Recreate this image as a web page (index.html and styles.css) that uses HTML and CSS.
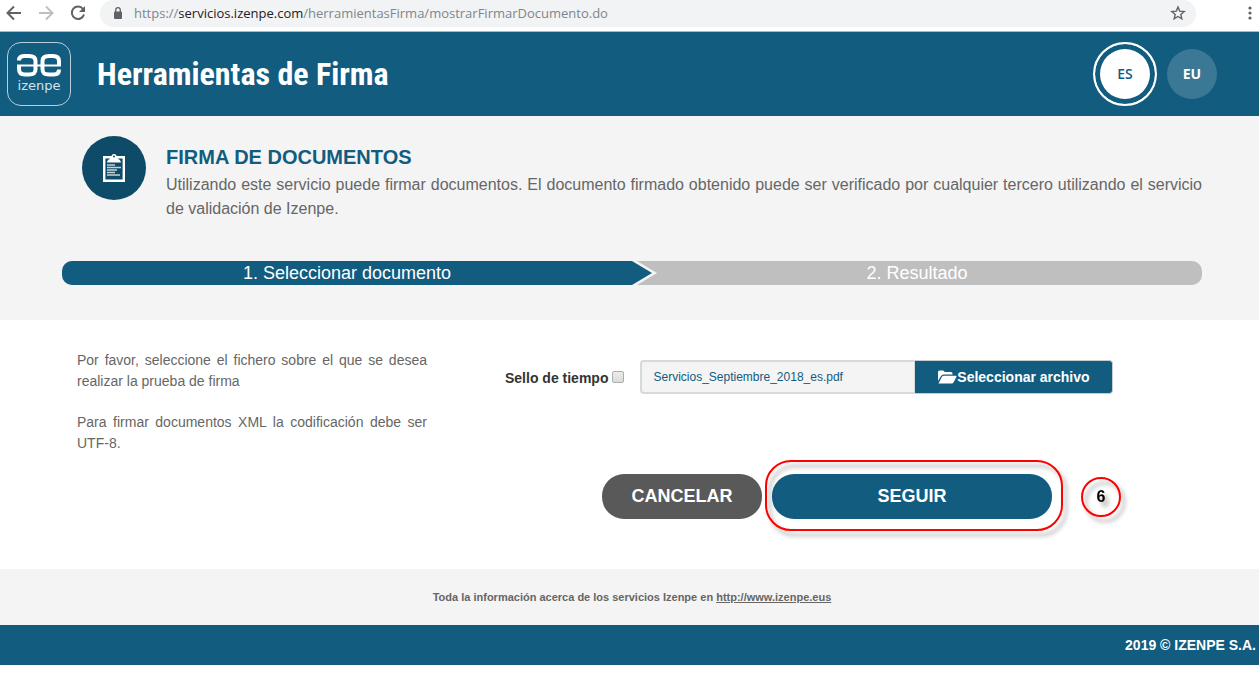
FILE: index.html
```html
<!DOCTYPE html>
<html lang="es">
<head>
    <meta charset="UTF-8">
    <meta name="viewport" content="width=device-width, initial-scale=1.0">
    <title>Herramientas de Firma</title>
    <link rel="stylesheet" href="styles.css">
</head>
<body>
    <div class="browser-bar">
        <button class="nav-btn" type="button" aria-label="Atrás">
            <svg width="16" height="16" viewBox="0 0 16 16"><path d="M15 8H2M8 1.5L1.5 8L8 14.5" fill="none" stroke="#5f6368" stroke-width="2"/></svg>
        </button>
        <button class="nav-btn" type="button" aria-label="Adelante">
            <svg width="16" height="16" viewBox="0 0 16 16"><path d="M1 8H14M8 1.5L14.5 8L8 14.5" fill="none" stroke="#bdbfc1" stroke-width="2"/></svg>
        </button>
        <button class="nav-btn" type="button" aria-label="Recargar">
            <svg width="16" height="16" viewBox="0 0 16 16"><path d="M13 4A6.2 6.2 0 1 0 14 9.5" fill="none" stroke="#5f6368" stroke-width="2"/><path d="M15 1V7H9Z" fill="#5f6368"/></svg>
        </button>
        <div class="address">
            <svg width="10" height="12" viewBox="0 0 10 12"><rect x="1" y="4.500" width="8" height="7.500" rx="1" fill="#5f6368"/><path d="M2.700 5V3a2.300 2.300 0 0 1 4.600 0V5" fill="none" stroke="#5f6368" stroke-width="1.300"/></svg>
            <span class="url">https://<b>servicios.izenpe.com</b>/herramientasFirma/mostrarFirmarDocumento.do</span>
            <svg width="16" height="16" viewBox="0 0 16 16"><path d="M8 2L9.700 6.100L14.200 6.500L10.800 9.400L11.800 13.800L8 11.500L4.200 13.800L5.200 9.400L1.800 6.500L6.300 6.100Z" fill="none" stroke="#5f6368" stroke-width="1.400"/></svg>
        </div>
        <button class="nav-btn menu-btn" type="button" aria-label="Menú">
            <svg width="4" height="14" viewBox="0 0 4 14"><circle cx="2" cy="2" r="1.600" fill="#5f6368"/><circle cx="2" cy="7" r="1.600" fill="#5f6368"/><circle cx="2" cy="12" r="1.600" fill="#5f6368"/></svg>
        </button>
    </div>

    <header class="header">
        <div class="logo">
            <svg width="46" height="24" viewBox="0 0 46 24" fill="none" stroke="#fff" stroke-width="4">
                <path d="M3 7.500C3 4 5 3 8 3H13C18 3 19.500 5 19.500 8V16C19.500 20 18 21.500 13 21.500H9C5 21.500 3 20 3 16V12"/>
                <path d="M43 16.500C43 20 41 21.500 38 21.500H33C28 21.500 26.500 20 26.500 16V8C26.500 5 28 3 33 3H37C41 3 43 5 43 8V13"/>
                <path d="M1 12.500H45" stroke-width="2"/>
            </svg>
            <span>izenpe</span>
        </div>
        <h1>Herramientas de Firma</h1>
        <nav class="langs">
            <a class="lang active" href="#">ES</a>
            <a class="lang" href="#">EU</a>
        </nav>
    </header>

    <section class="intro">
        <div class="service">
            <div class="service-icon">
                <svg width="24" height="30" viewBox="0 0 24 30">
                    <path d="M2.200 4.200H21.800V27.800H2.200Z" fill="none" stroke="#fff" stroke-width="2.400"/>
                    <path d="M5 9.500C5.500 6 9 6 9.500 3.500A2.500 2.500 0 0 1 14.500 3.500C15 6 18.500 6 19 9.500Z" fill="#fff"/>
                    <circle cx="12" cy="3.500" r="1" fill="#0e4b69"/>
                    <path d="M5 12H13M5 14.500H19M5 17H15M5 19.500H13M5 22H18" stroke="#c3d2da" stroke-width="1.400"/>
                </svg>
            </div>
            <div class="service-text">
                <h2>FIRMA DE DOCUMENTOS</h2>
                <p>Utilizando este servicio puede firmar documentos. El documento firmado obtenido puede ser verificado por cualquier tercero utilizando el servicio de validación de Izenpe.</p>
            </div>
        </div>
        <div class="steps">
            <div class="step current">1. Seleccionar documento</div>
            <div class="step">2. Resultado</div>
        </div>
    </section>

    <main class="content">
        <div class="help">
            <p>Por favor, seleccione el fichero sobre el que se desea realizar la prueba de firma</p>
            <p>Para firmar documentos XML la codificación debe ser UTF-8.</p>
        </div>
        <form class="sign-form">
            <div class="file-row">
                <label for="sello">Sello de tiempo</label>
                <input type="checkbox" id="sello">
                <div class="file-group">
                    <input type="text" value="Servicios_Septiembre_2018_es.pdf" aria-label="Archivo" readonly>
                    <button type="button">
                        <svg width="19" height="14" viewBox="0 0 19 14" fill="#fff"><path d="M0 11V2Q0 .5 1.500 .5H5Q6.500 .5 6.500 2H13Q14.500 2 14.500 3.500V4.500H5.500Q4 4.500 3 6Z"/><path d="M.5 13.500L3.800 7Q4.400 5.700 6 5.700H18Q19 5.700 18.400 7L15.800 12Q15 13.500 13.500 13.500Z"/></svg>Seleccionar archivo
                    </button>
                </div>
            </div>
            <div class="actions">
                <button class="btn cancel" type="button">CANCELAR</button>
                <div class="highlight">
                    <button class="btn next" type="button">SEGUIR</button>
                </div>
                <span class="mark">6</span>
            </div>
        </form>
    </main>

    <div class="info">
        Toda la información acerca de los servicios Izenpe en <a href="http://www.izenpe.eus">http://www.izenpe.eus</a>
    </div>
    <footer class="footer">2019 © IZENPE S.A.</footer>
</body>
</html>
```
FILE: styles.css
```css
:root{
    --primary: #125c7f;
    --primary-dark: #0e4b69;
    --light: #f4f4f4;
    --text: #666;
    --border: #d9d9d9;
}

*{
    box-sizing: border-box;
    padding: 0;
    margin: 0;
}
body{
    background-color: #fff;
    color: var(--text);
    font-family: "Liberation Sans", Arial, sans-serif;
    font-size: 14px;
}
button{
    border: none;
    cursor: pointer;
    font-family: inherit;
}
svg{
    flex-shrink: 0;
}

/* browser bar */
.browser-bar{
    display: flex;
    align-items: flex-start;
    gap: 16px;
    height: 32px;
    padding: 0 7px 0 6px;
    border-bottom: 1px solid #b6b4b6;
}
.nav-btn{
    display: flex;
    align-items: center;
    height: 26px;
    background: none;
}
.address{
    flex-grow: 1;
    display: flex;
    align-items: center;
    gap: 11px;
    height: 27px;
    margin-left: -2px;
    padding: 0 10px 1px 13px;
    border-radius: 14px;
    background-color: #f1f3f4;
}
.url{
    flex-grow: 1;
    font-family: "Open Sans", "Noto Sans", sans-serif;
    font-size: 13px;
    color: #80868b;
}
.url b{
    font-weight: normal;
    color: #202124;
}
.menu-btn{
    margin-left: 36px;
}

/* header */
.header{
    display: flex;
    align-items: center;
    height: 84px;
    padding: 0 42px 0 7px;
    background-color: var(--primary);
    color: #fff;
}
.logo{
    display: flex;
    flex-direction: column;
    align-items: center;
    width: 64px;
    height: 64px;
    padding-top: 10px;
    border: 1px solid #b9cfda;
    border-radius: 14px;
}
.logo span{
    font-family: "DejaVu Sans", sans-serif;
    font-size: 13px;
    line-height: 18px;
    color: #d5e2e9;
}
.header h1{
    margin-left: 26px;
    font-family: "Roboto Condensed", "Liberation Sans Narrow", "Liberation Sans", sans-serif;
    font-size: 32px;
    font-weight: bold;
}
.langs{
    display: flex;
    align-items: center;
    gap: 10px;
    margin-left: auto;
}
.lang{
    display: flex;
    align-items: center;
    justify-content: center;
    width: 50px;
    height: 50px;
    border-radius: 50%;
    background-color: #3b7896;
    color: #fff;
    font-family: "Open Sans", "Noto Sans", sans-serif;
    font-size: 14px;
    line-height: 18px;
    font-weight: bold;
    text-decoration: none;
}
.lang.active{
    width: 64px;
    height: 64px;
    border: 2px solid #fff;
    background-color: #fff;
    box-shadow: inset 0 0 0 5px var(--primary);
    color: var(--primary);
    font-weight: 600;
}

/* intro */
.intro{
    padding: 20px 57px 35px 62px;
    background-color: var(--light);
}
.service{
    display: flex;
    gap: 20px;
    padding-left: 20px;
}
.service-icon{
    display: flex;
    align-items: center;
    justify-content: center;
    flex-shrink: 0;
    width: 64px;
    height: 64px;
    border-radius: 50%;
    background-color: var(--primary-dark);
}
.service-text{
    padding-top: 10px;
}
.service-text h2{
    font-size: 20px;
    line-height: 22px;
    margin-bottom: 5px;
    color: var(--primary);
}
.service-text p{
    font-size: 16px;
    line-height: 24px;
    text-align: justify;
}
.steps{
    display: flex;
    margin-top: 40px;
    border-radius: 10px;
    overflow: hidden;
    background-color: #bfbfbf;
    color: #fff;
    font-size: 18px;
    line-height: 24px;
    text-align: center;
}
.step{
    flex: 1;
}
.step.current{
    position: relative;
    background-color: var(--primary);
}
.step.current::before,
.step.current::after{
    content: '';
    position: absolute;
    top: 0;
    left: 100%;
    border-top: 12px solid transparent;
    border-bottom: 12px solid transparent;
}
/* light strip: a second chevron, shifted to the right */
.step.current::before{
    width: 4px;
    height: 24px;
    border: none;
    box-sizing: content-box;
    padding-right: 21px;
    background-color: var(--light);
    clip-path: polygon(0 0, 5px 0, 100% 50%, 5px 100%, 0 100%);
}
.step.current::after{
    border-left: 20px solid var(--primary);
}

/* form */
.content{
    display: flex;
    gap: 78px;
    padding: 30px 57px 50px 77px;
}
.help{
    width: 350px;
    flex-shrink: 0;
    line-height: 21px;
    text-align: justify;
}
.help p{
    margin-bottom: 20px;
}
.sign-form{
    flex-grow: 1;
    padding-top: 10px;
}
.file-row{
    display: flex;
    align-items: center;
}
.file-row label{
    padding-top: 2px;
    font-weight: bold;
    color: #333;
}
.file-row input[type="checkbox"]{
    appearance: none;
    width: 12px;
    height: 12px;
    margin: 0 16px 0 4px;
    border: 1px solid #adadad;
    border-radius: 2px;
    background: linear-gradient(#ececec, #dcdcdc);
}
.file-group{
    display: flex;
    height: 34px;
}
.file-group input{
    width: 275px;
    padding: 0 11px;
    border: 2px solid var(--border);
    border-right-width: 1px;
    border-radius: 4px 0 0 4px;
    background-color: var(--light);
    color: var(--primary);
    font-family: inherit;
    font-size: 12px;
}
.file-group button{
    display: flex;
    align-items: center;
    justify-content: center;
    width: 198px;
    border: 1px solid #c4cdd2;
    border-left: none;
    border-radius: 0 4px 4px 0;
    background-color: var(--primary);
    color: #fff;
    font-size: 14px;
    font-weight: bold;
}
.actions{
    display: flex;
    align-items: center;
    margin: 80px 0 0 97px;
}
.btn{
    height: 45px;
    border-radius: 22px;
    color: #fff;
    font-size: 18px;
    font-weight: bold;
}
.btn.cancel{
    width: 160px;
    background-color: #595959;
}
.btn.next{
    width: 280px;
    background-color: var(--primary);
}
.highlight{
    position: relative;
    margin-left: 10px;
}
.highlight::after{
    content: '';
    position: absolute;
    inset: -14px -11px -12px -7px;
    border: 2px solid #f00;
    border-radius: 26px;
    filter: drop-shadow(4px 5px 2px #0005);
    pointer-events: none;
}
.mark{
    display: flex;
    align-items: center;
    justify-content: center;
    width: 40px;
    height: 40px;
    margin-left: 29px;
    border: 2px solid #f00;
    border-radius: 50%;
    filter: drop-shadow(4px 5px 2px #0005);
    color: #000;
    font-size: 16px;
    font-weight: bold;
}

/* footer */
.info{
    padding-left: 5px;
    background-color: var(--light);
    font-size: 11px;
    font-weight: bold;
    line-height: 56px;
    text-align: center;
}
.info a{
    color: inherit;
}
.footer{
    padding-right: 3px;
    background-color: var(--primary);
    color: #fff;
    font-size: 14px;
    font-weight: bold;
    line-height: 40px;
    text-align: right;
}
```
